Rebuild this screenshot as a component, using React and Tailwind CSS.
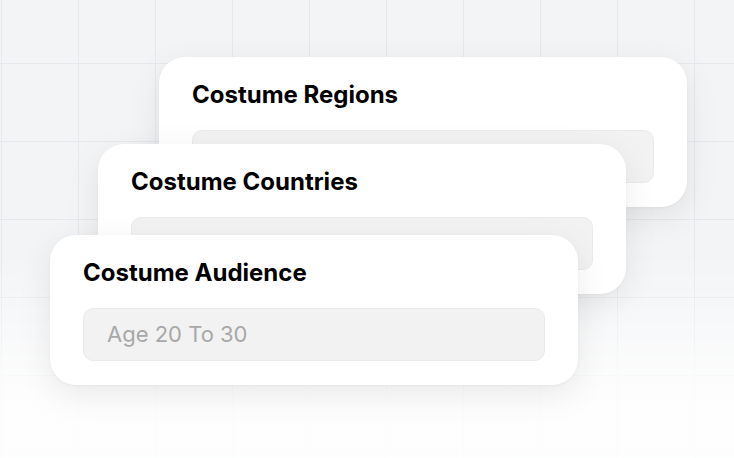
import React from 'react';

const fields = [
  { title: 'Costume Regions', value: '', offset: 'ml-[159px] mt-[57px]' },
  { title: 'Costume Countries', value: '', offset: 'ml-[98px] -mt-[63px]' },
  { title: 'Costume Audience', value: 'Age 20 To 30', offset: 'ml-[50px] -mt-[59px]' },
];

const FieldCard = ({ title, value, offset }) => (
  <div
    className={`relative w-[528px] h-[150px] shrink-0 rounded-[26px] bg-white px-[33px] pt-[24px] shadow-[0_10px_34px_rgba(0,0,0,0.08),0_1px_3px_rgba(0,0,0,0.04)] ${offset}`}
  >
    <h3 className="text-[24px] leading-[28px] font-bold tracking-[0] text-black">{title}</h3>
    <div className="mt-[21px] flex h-[53px] items-center rounded-[10px] border border-[#ebebeb] bg-[#f2f2f2] px-[23px] text-[22px] text-[#a8a8a8]">
      {value}
    </div>
  </div>
);

const App = () => {
  return (
    <div className="flex h-[458px] w-[734px] flex-col overflow-hidden bg-[#f3f4f6] bg-[linear-gradient(to_bottom,rgba(255,255,255,0)_55%,rgba(255,255,255,0.88)_88%),linear-gradient(to_right,#e5e8ec_1px,transparent_1px),linear-gradient(to_bottom,#e5e8ec_1px,transparent_1px)] bg-[length:100%_100%,77px_78px,77px_78px] bg-[position:0_0,1px_0,0_63px] font-['Inter',sans-serif]">
      {fields.map((f) => (
        <FieldCard key={f.title} {...f} />
      ))}
    </div>
  );
};

export default App;
